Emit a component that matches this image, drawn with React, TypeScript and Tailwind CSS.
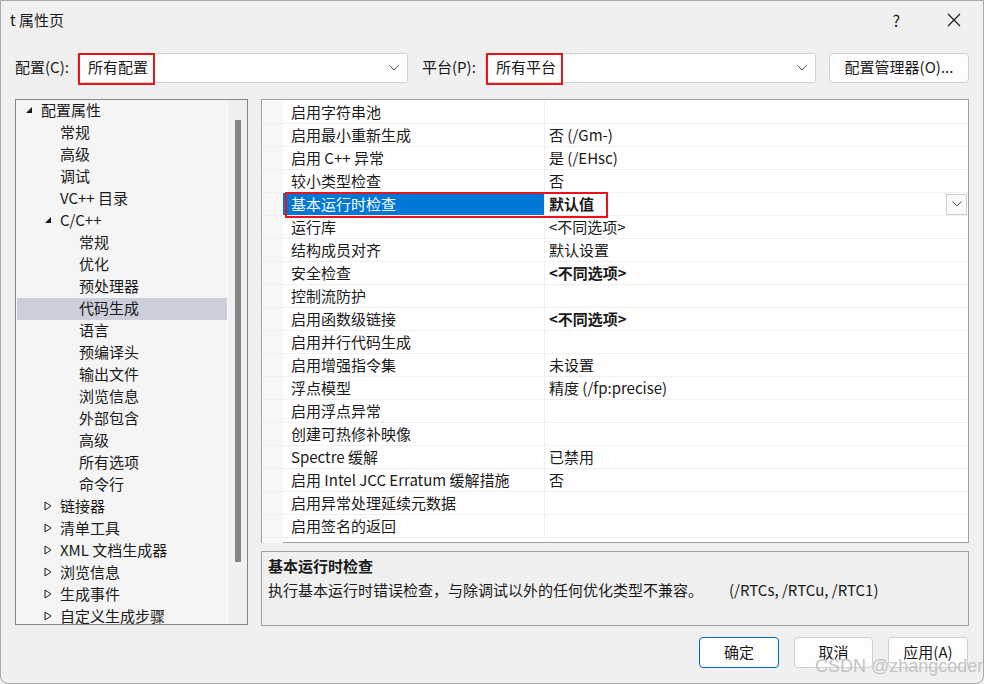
import React from "react";

const font = { fontFamily: '"Noto Sans CJK SC", "Noto Sans", sans-serif' };

type TreeItem = { label: string; level: number; toggle?: "open" | "closed"; selected?: boolean };

const tree: TreeItem[] = [
  { label: "配置属性", level: 0, toggle: "open" },
  { label: "常规", level: 1 },
  { label: "高级", level: 1 },
  { label: "调试", level: 1 },
  { label: "VC++ 目录", level: 1 },
  { label: "C/C++", level: 1, toggle: "open" },
  { label: "常规", level: 2 },
  { label: "优化", level: 2 },
  { label: "预处理器", level: 2 },
  { label: "代码生成", level: 2, selected: true },
  { label: "语言", level: 2 },
  { label: "预编译头", level: 2 },
  { label: "输出文件", level: 2 },
  { label: "浏览信息", level: 2 },
  { label: "外部包含", level: 2 },
  { label: "高级", level: 2 },
  { label: "所有选项", level: 2 },
  { label: "命令行", level: 2 },
  { label: "链接器", level: 1, toggle: "closed" },
  { label: "清单工具", level: 1, toggle: "closed" },
  { label: "XML 文档生成器", level: 1, toggle: "closed" },
  { label: "浏览信息", level: 1, toggle: "closed" },
  { label: "生成事件", level: 1, toggle: "closed" },
  { label: "自定义生成步骤", level: 1, toggle: "closed" },
];

type Prop = { name: string; value?: string; bold?: boolean; selected?: boolean };

const props: Prop[] = [
  { name: "启用字符串池" },
  { name: "启用最小重新生成", value: "否 (/Gm-)" },
  { name: "启用 C++ 异常", value: "是 (/EHsc)" },
  { name: "较小类型检查", value: "否" },
  { name: "基本运行时检查", value: "默认值", bold: true, selected: true },
  { name: "运行库", value: "<不同选项>" },
  { name: "结构成员对齐", value: "默认设置" },
  { name: "安全检查", value: "<不同选项>", bold: true },
  { name: "控制流防护" },
  { name: "启用函数级链接", value: "<不同选项>", bold: true },
  { name: "启用并行代码生成" },
  { name: "启用增强指令集", value: "未设置" },
  { name: "浮点模型", value: "精度 (/fp:precise)" },
  { name: "启用浮点异常" },
  { name: "创建可热修补映像" },
  { name: "Spectre 缓解", value: "已禁用" },
  { name: "启用 Intel JCC Erratum 缓解措施", value: "否" },
  { name: "启用异常处理延续元数据" },
  { name: "启用签名的返回" },
];

function Chevron({ className = "" }: { className?: string }) {
  return (
    <svg width="10" height="6" viewBox="0 0 10 6" className={className}>
      <path d="M0.5 0.5 L5 5 L9.5 0.5" fill="none" stroke="#555" strokeWidth="1" />
    </svg>
  );
}

function Toggle({ kind }: { kind: "open" | "closed" }) {
  if (kind === "open") {
    return (
      <svg width="8" height="8" viewBox="0 0 8 8">
        <path d="M7 1 L7 7 L1 7 Z" fill="#1a1a1a" />
      </svg>
    );
  }
  return (
    <svg width="8" height="10" viewBox="0 0 8 10">
      <path d="M1 1 L7 5 L1 9 Z" fill="none" stroke="#1a1a1a" strokeWidth="1" />
    </svg>
  );
}

function Combo({ text }: { text: string }) {
  return (
    <div className="relative flex items-center h-[30px] w-[331px] bg-white border border-[#d4d4d4] rounded-[3px] pl-[10px] pr-[8px]">
      <span className="text-[15px] text-[#1a1a1a]">{text}</span>
      <div className="flex-1" />
      <Chevron />
      <div className="absolute left-[0px] top-[-1px] w-[77px] h-[32px] border-2 border-[#e8141c]" />
    </div>
  );
}

export default function App() {
  return (
    <div style={font} className="w-[984px] h-[684px] overflow-hidden bg-[#f0f0f0] text-[#1a1a1a] relative">
      <div className="flex h-[684px] flex-col border border-[#a8a8a8] rounded-b-[8px] bg-[#f0f0f0]">
        {/* title bar */}
        <div className="flex items-center h-[38px] pl-[9px] pr-[22px]">
          <span className="text-[15px]">t 属性页</span>
          <div className="flex-1" />
          <span className="text-[16px] mr-[47px]">?</span>
          <svg width="14" height="14" viewBox="0 0 14 14">
            <path d="M1 1 L13 13 M13 1 L1 13" stroke="#1a1a1a" strokeWidth="1.2" />
          </svg>
        </div>

        {/* config row */}
        <div className="flex items-center mt-[13px] pl-[14px] h-[31px]">
          <span className="text-[15px] w-[62px]">配置(C):</span>
          <Combo text="所有配置" />
          <span className="text-[15px] ml-[14px] w-[63px]">平台(P):</span>
          <Combo text="所有平台" />
          <button className="ml-[13px] h-[30px] w-[140px] bg-[#fdfdfd] border border-[#d0d0d0] rounded-[4px] text-[15px]">
            配置管理器(O)...
          </button>
        </div>

        {/* main area */}
        <div className="flex mt-[16px] pl-[14px] gap-[13px]">
          {/* tree */}
          <div className="w-[233px] h-[526px] border border-[#828790] bg-[#f5f5f5] flex overflow-hidden">
            <div className="flex-1 pl-[1px]">
              {tree.map((t, i) => (
                <div
                  key={i}
                  className={
                    "flex items-center h-[22px] pb-[2px] text-[15px] " + (t.selected ? "bg-[#cccedb]" : "")
                  }
                  style={{ paddingLeft: 8 + t.level * 19 }}
                >
                  <div className="w-[16px] flex items-center">{t.toggle && <Toggle kind={t.toggle} />}</div>
                  <span className="whitespace-nowrap">{t.label}</span>
                </div>
              ))}
            </div>
            <div className="w-[20px] border-l border-[#fafafa] bg-[#f0f0f0] flex justify-center pt-[20px]">
              <div className="w-[6px] h-[442px] bg-[#858585]" />
            </div>
          </div>

          {/* grid + description */}
          <div className="flex flex-col w-[708px]">
            <div className="h-[444px] border border-[#a0a0a0] bg-white pt-[1px] relative">
              {props.map((p, i) => (
                <div key={i} className="flex h-[23px] border-b border-[#f0f0f0] text-[15px]">
                  <div className="w-[21px] bg-[#f7f7f7]" />
                  <div
                    className={
                      "w-[262px] flex items-center pl-[8px] border-r border-[#f0f0f0] whitespace-nowrap " +
                      (p.selected ? "bg-[#0078d7] text-white" : "")
                    }
                  >
                    {p.name}
                  </div>
                  <div className={"flex-1 flex items-center pl-[4px] " + (p.bold ? "font-bold" : "")}>
                    {p.value}
                    {p.selected && (
                      <>
                        <div className="flex-1" />
                        <div className="w-[21px] h-[21px] mr-[1px] border border-[#cfcfcf] bg-[#fafafa] flex items-center justify-center">
                          <Chevron />
                        </div>
                      </>
                    )}
                  </div>
                </div>
              ))}
              <div className="absolute left-[23px] top-[92px] w-[323px] h-[26px] border-2 border-[#e8141c]" />
              <div className="w-[21px] h-[5px] bg-[#f7f7f7]" />
            </div>

            <div className="mt-[8px] h-[75px] border border-[#a0a0a0] bg-[#f0f0f0] px-[6px] pt-[2px]">
              <div className="text-[15px] font-bold leading-[24px]">基本运行时检查</div>
              <div className="text-[15px] leading-[23px] whitespace-nowrap">
                执行基本运行时错误检查，与除调试以外的任何优化类型不兼容。<span className="ml-[26px]">(/RTCs, /RTCu, /RTC1)</span>
              </div>
            </div>
          </div>
        </div>

        {/* buttons */}
        <div className="flex justify-end gap-[15px] pr-[15px] mt-[11px]">
          <button className="h-[31px] w-[80px] bg-[#fdfdfd] border border-[#0067c0] rounded-[4px] text-[15px]">确定</button>
          <button className="h-[31px] w-[79px] bg-[#fdfdfd] border border-[#d0d0d0] rounded-[4px] text-[15px]">取消</button>
          <button className="h-[31px] w-[80px] bg-[#fdfdfd] border border-[#d0d0d0] rounded-[4px] text-[15px]">应用(A)</button>
        </div>
      </div>

      <div className="absolute left-[815px] top-[653px] text-[18px] text-[#c4c4c4] whitespace-nowrap" style={{ fontFamily: '"Liberation Sans", sans-serif' }}>
        CSDN @zhangcoder
      </div>
    </div>
  );
}
